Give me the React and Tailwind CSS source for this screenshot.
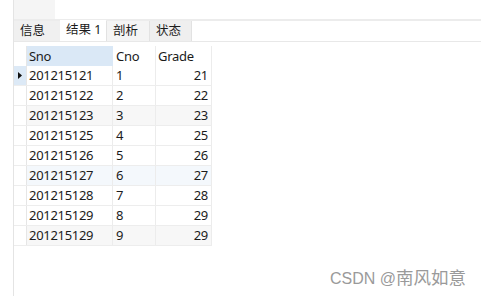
import React from "react";

const rows = [
  { sno: "201215121", cno: "1", grade: "21", bg: "bg-white", current: true },
  { sno: "201215122", cno: "2", grade: "22", bg: "bg-white" },
  { sno: "201215123", cno: "3", grade: "23", bg: "bg-[#f7f7f7]" },
  { sno: "201215125", cno: "4", grade: "25", bg: "bg-white" },
  { sno: "201215126", cno: "5", grade: "26", bg: "bg-white" },
  { sno: "201215127", cno: "6", grade: "27", bg: "bg-[#f4f8fc]" },
  { sno: "201215128", cno: "7", grade: "28", bg: "bg-white" },
  { sno: "201215129", cno: "8", grade: "29", bg: "bg-white" },
  { sno: "201215129", cno: "9", grade: "29", bg: "bg-[#f7f7f7]" },
];

const tabs = [
  { label: "信息", w: "w-[46px]", cls: "bg-[#f0f0f0]" },
  { label: "结果 1", w: "w-[46px]", cls: "bg-white -mt-[1px]" },
  { label: "剖析", w: "w-[43px]", cls: "bg-[#f4f4f4] border-l border-[#e2e2e2]" },
  { label: "状态", w: "w-[43px]", cls: "bg-[#efefef] border-x border-[#e2e2e2]" },
];

const font = { fontFamily: '"Noto Sans", "Noto Sans CJK SC", sans-serif' };

export default function App() {
  return (
    <div
      className="relative w-[481px] h-[296px] bg-white overflow-hidden flex text-[#1b1b1b]"
      style={font}
    >
      <div className="w-[13px] shrink-0" />
      <div className="flex-1 flex flex-col border-l border-[#e4e4e4]">
        {/* toolbar strip */}
        <div className="h-[19px] flex">
          <div className="w-[41px] bg-[#f5f5f5]" />
        </div>
        <div className="h-[2px] bg-[#ececec]" />

        {/* tabs */}
        <div className="h-[21px] flex border-b border-[#e8e8e8]">
          {tabs.map((t) => (
            <div
              key={t.label}
              className={`${t.w} ${t.cls} flex items-center pl-[6px] text-[12.5px] leading-none`}
            >
              {t.label}
            </div>
          ))}
        </div>

        <div className="h-[4px]" />

        {/* result grid */}
        <div className="w-[198px] text-[13px] tracking-[-0.3px] leading-none">
          <div className="grid grid-cols-[13px_86px_43px_56px] h-[20px]">
            <div className="border-r border-[#e6e6e6]" />
            <div className="bg-[#dae8f6] flex items-center pl-[2px]">Sno</div>
            <div className="flex items-center pl-[3px] border-r border-[#ececec]">Cno</div>
            <div className="flex items-center pl-[2px] border-r border-[#ececec]">Grade</div>
          </div>
          {rows.map((r, i) => (
            <div
              key={i}
              className={`grid grid-cols-[13px_86px_43px_56px] h-[20px] border-b border-[#ededed] ${r.bg}`}
            >
              <div
                className={`flex items-center justify-center border-r border-[#e6e6e6] ${
                  r.current ? "bg-[#dce9f6]" : "bg-white"
                }`}
              >
                {r.current && (
                  <svg width="4" height="7" viewBox="0 0 4 7">
                    <path d="M0 0 L4 3.5 L0 7 Z" fill="#111" />
                  </svg>
                )}
              </div>
              <div className="flex items-center pl-[2px] border-r border-[#ececec]">{r.sno}</div>
              <div className="flex items-center pl-[3px] border-r border-[#ececec]">{r.cno}</div>
              <div className="flex items-center justify-end pr-[3px] border-r border-[#ececec]">
                {r.grade}
              </div>
            </div>
          ))}
        </div>
      </div>

      {/* watermark */}
      <div
        className="absolute left-[330px] top-[270px] flex items-center text-[#9a9a9a] leading-none"
        style={{ fontFamily: '"Liberation Sans", "Noto Sans CJK SC", sans-serif' }}
      >
        <span className="text-[16px]">CSDN @</span>
        <span className="text-[17.5px]">南风如意</span>
      </div>
    </div>
  );
}
